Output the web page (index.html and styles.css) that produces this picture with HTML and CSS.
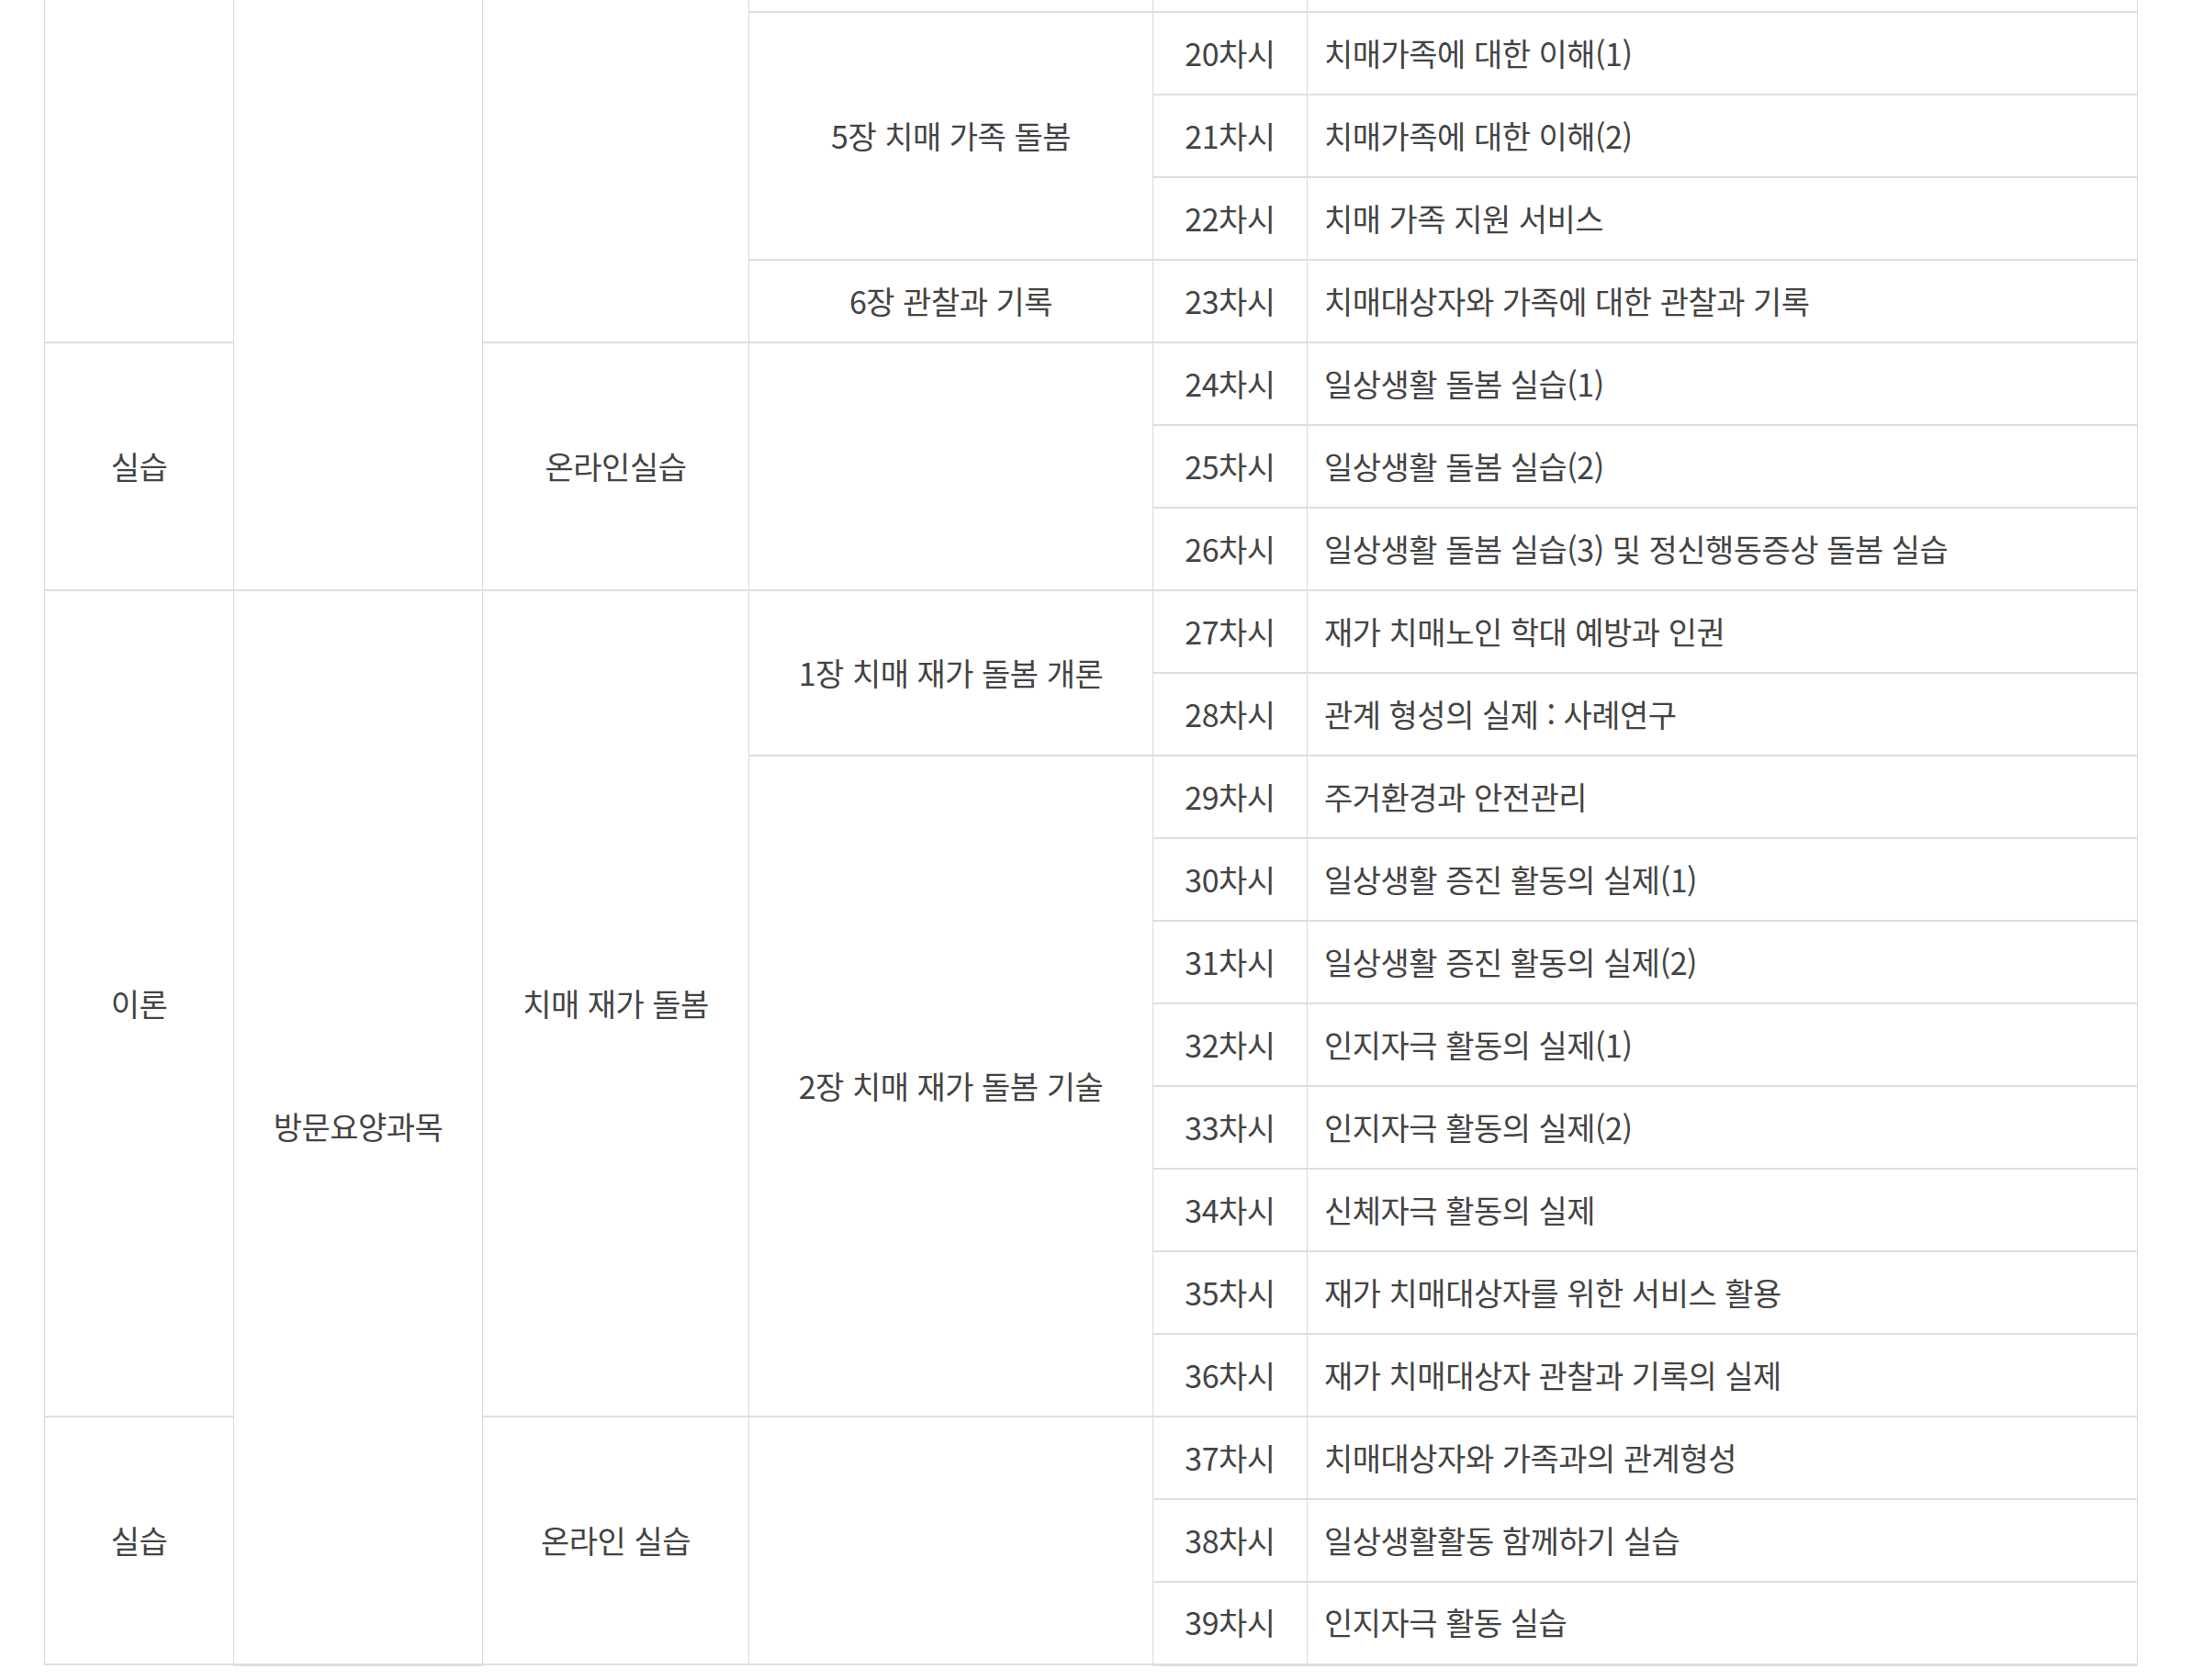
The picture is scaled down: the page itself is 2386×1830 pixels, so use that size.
FILE: index.html
```html
<!DOCTYPE html>
<html lang="ko">
<head>
<meta charset="utf-8">
<title>치매 전문교육 차시</title>
<link rel="stylesheet" href="styles.css">
</head>
<body>
<div class="wrap">
<table class="curri">
<colgroup>
<col class="c1"><col class="c2"><col class="c3"><col class="c4"><col class="c5"><col class="c6">
</colgroup>
<tbody>
<tr>
<td rowspan="5"></td>
<td rowspan="8"></td>
<td rowspan="5"></td>
<td></td>
<td></td>
<td class="left"></td>
</tr>
<tr>
<td rowspan="3">5장 치매 가족 돌봄</td>
<td>20차시</td>
<td class="left">치매가족에 대한 이해(1)</td>
</tr>
<tr>
<td>21차시</td>
<td class="left">치매가족에 대한 이해(2)</td>
</tr>
<tr>
<td>22차시</td>
<td class="left">치매 가족 지원 서비스</td>
</tr>
<tr>
<td>6장 관찰과 기록</td>
<td>23차시</td>
<td class="left">치매대상자와 가족에 대한 관찰과 기록</td>
</tr>
<tr>
<td rowspan="3">실습</td>
<td rowspan="3">온라인실습</td>
<td rowspan="3"></td>
<td>24차시</td>
<td class="left">일상생활 돌봄 실습(1)</td>
</tr>
<tr>
<td>25차시</td>
<td class="left">일상생활 돌봄 실습(2)</td>
</tr>
<tr>
<td>26차시</td>
<td class="left">일상생활 돌봄 실습(3) 및 정신행동증상 돌봄 실습</td>
</tr>
<tr>
<td rowspan="10">이론</td>
<td rowspan="13">방문요양과목</td>
<td rowspan="10">치매 재가 돌봄</td>
<td rowspan="2">1장 치매 재가 돌봄 개론</td>
<td>27차시</td>
<td class="left">재가 치매노인 학대 예방과 인권</td>
</tr>
<tr>
<td>28차시</td>
<td class="left">관계 형성의 실제 : 사례연구</td>
</tr>
<tr>
<td rowspan="8">2장 치매 재가 돌봄 기술</td>
<td>29차시</td>
<td class="left">주거환경과 안전관리</td>
</tr>
<tr>
<td>30차시</td>
<td class="left">일상생활 증진 활동의 실제(1)</td>
</tr>
<tr>
<td>31차시</td>
<td class="left">일상생활 증진 활동의 실제(2)</td>
</tr>
<tr>
<td>32차시</td>
<td class="left">인지자극 활동의 실제(1)</td>
</tr>
<tr>
<td>33차시</td>
<td class="left">인지자극 활동의 실제(2)</td>
</tr>
<tr>
<td>34차시</td>
<td class="left">신체자극 활동의 실제</td>
</tr>
<tr>
<td>35차시</td>
<td class="left">재가 치매대상자를 위한 서비스 활용</td>
</tr>
<tr>
<td>36차시</td>
<td class="left">재가 치매대상자 관찰과 기록의 실제</td>
</tr>
<tr>
<td rowspan="3">실습</td>
<td rowspan="3">온라인 실습</td>
<td rowspan="3"></td>
<td>37차시</td>
<td class="left">치매대상자와 가족과의 관계형성</td>
</tr>
<tr>
<td>38차시</td>
<td class="left">일상생활활동 함께하기 실습</td>
</tr>
<tr>
<td>39차시</td>
<td class="left">인지자극 활동 실습</td>
</tr>
</tbody>
</table>
</div>
</body>
</html>
```

FILE: styles.css
```css
html, body {
  margin: 0;
  padding: 0;
  background: #ffffff;
}

.wrap {
  margin-top: -78px;
  padding-left: 48px;
}

.curri {
  border-collapse: collapse;
  table-layout: fixed;
  width: 2280px;
  font-family: "Noto Sans CJK KR", "Noto Sans", sans-serif;
  font-size: 34px;
  letter-spacing: -0.5px;
  color: #444444;
}

.c1 { width: 206px; }
.c2 { width: 271px; }
.c3 { width: 290px; }
.c4 { width: 440px; }
.c5 { width: 168px; }
.c6 { width: auto; }

.curri tr {
  height: 90px;
}

.curri td {
  padding: 0;
  text-align: center;
  vertical-align: middle;
  border-left: 1px solid #dadada;
  border-right: 1px solid #dadada;
  border-top: 2px solid #dedede;
  border-bottom: 2px solid #dedede;
  line-height: 1.2;
  white-space: nowrap;
}

.curri td.left {
  text-align: left;
  padding-left: 18px;
}

.curri tr:last-child td,
.curri td[rowspan="13"] {
  border-bottom-width: 3px;
}
```
